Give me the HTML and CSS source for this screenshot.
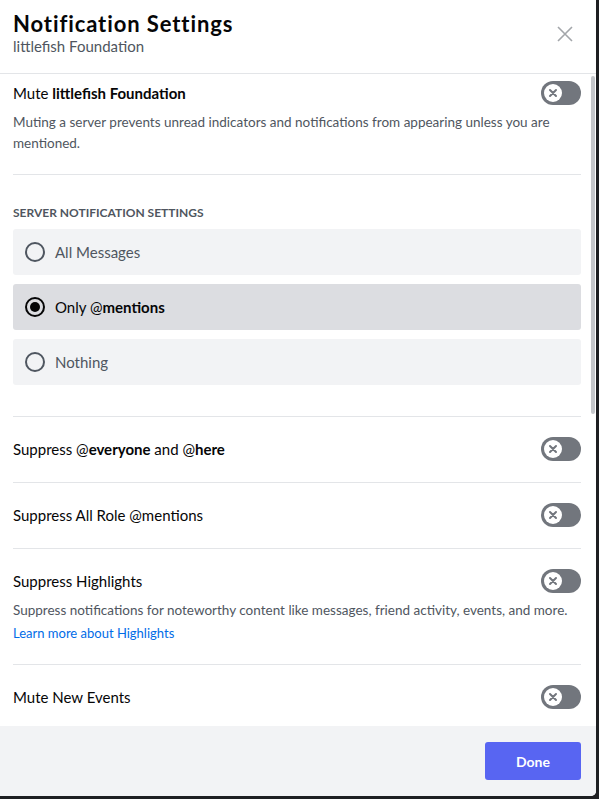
FILE: index.html
```html
<!DOCTYPE html>
<html lang="en">
<head>
<meta charset="utf-8">
<title>Notification Settings</title>
<link rel="stylesheet" href="styles.css">
</head>
<body>
<div class="modal">
  <header class="modal-header">
    <div class="titles">
      <h1 class="title">Notification Settings</h1>
      <div class="subtitle">littlefish Foundation</div>
    </div>
    <button class="close" aria-label="Close">
      <svg width="16" height="16" viewBox="0 0 16 16"><path d="M1 1L15 15M15 1L1 15" stroke="#a3a6aa" stroke-width="1.6" fill="none"/></svg>
    </button>
  </header>
  <div class="content-wrap">
    <div class="content">
      <section class="section first">
        <div class="row">
          <div class="row-title">Mute <strong>littlefish Foundation</strong></div>
          <span class="toggle"><span class="knob"><svg width="10" height="10" viewBox="0 0 10 10"><path d="M2 2L8 8M8 2L2 8" stroke="#72767d" stroke-width="2" stroke-linecap="round"/></svg></span></span>
        </div>
        <p class="desc">Muting a server prevents unread indicators and notifications from appearing unless you are mentioned.</p>
      </section>
      <section class="group">
        <h2 class="label">Server Notification Settings</h2>
        <div class="options">
          <div class="option"><span class="radio"></span><span>All Messages</span></div>
          <div class="option selected"><span class="radio"></span><span>Only @<strong>mentions</strong></span></div>
          <div class="option"><span class="radio"></span><span>Nothing</span></div>
        </div>
      </section>
      <section class="section">
        <div class="row">
          <div class="row-title">Suppress @<strong>everyone</strong> and @<strong>here</strong></div>
          <span class="toggle"><span class="knob"><svg width="10" height="10" viewBox="0 0 10 10"><path d="M2 2L8 8M8 2L2 8" stroke="#72767d" stroke-width="2" stroke-linecap="round"/></svg></span></span>
        </div>
      </section>
      <section class="section">
        <div class="row">
          <div class="row-title">Suppress All Role @mentions</div>
          <span class="toggle"><span class="knob"><svg width="10" height="10" viewBox="0 0 10 10"><path d="M2 2L8 8M8 2L2 8" stroke="#72767d" stroke-width="2" stroke-linecap="round"/></svg></span></span>
        </div>
      </section>
      <section class="section">
        <div class="row">
          <div class="row-title">Suppress Highlights</div>
          <span class="toggle"><span class="knob"><svg width="10" height="10" viewBox="0 0 10 10"><path d="M2 2L8 8M8 2L2 8" stroke="#72767d" stroke-width="2" stroke-linecap="round"/></svg></span></span>
        </div>
        <p class="desc">Suppress notifications for noteworthy content like messages, friend activity, events, and more.</p>
        <a class="link" href="#">Learn more about Highlights</a>
      </section>
      <section class="section last">
        <div class="row">
          <div class="row-title">Mute New Events</div>
          <span class="toggle"><span class="knob"><svg width="10" height="10" viewBox="0 0 10 10"><path d="M2 2L8 8M8 2L2 8" stroke="#72767d" stroke-width="2" stroke-linecap="round"/></svg></span></span>
        </div>
      </section>
    </div>
    <div class="scrollbar"></div>
  </div>
  <footer class="modal-footer">
    <button class="done">Done</button>
  </footer>
</div>
</body>
</html>
```
FILE: styles.css
```css
* { box-sizing: border-box; }
html, body { margin: 0; padding: 0; }
body {
  background: #1e1f22;
  font-family: Lato, "Open Sans", sans-serif;
  width: 599px;
  height: 799px;
  overflow: hidden;
}
.modal {
  width: 596px;
  height: 796px;
  background: #fff;
  border-bottom-right-radius: 5px;
  display: flex;
  flex-direction: column;
  overflow: hidden;
}
.modal-header {
  height: 74px;
  border-bottom: 1px solid #e3e5e8;
  display: flex;
  justify-content: space-between;
  padding: 11px 23px 0 13px;
  flex-shrink: 0;
}
.title {
  margin: 0;
  font-size: 22px;
  line-height: 26px;
  font-weight: 700;
  letter-spacing: 0.9px;
  color: #060607;
}
.subtitle {
  font-size: 15px;
  line-height: 19px;
  color: #4f5660;
}
.close {
  background: none;
  border: 0;
  padding: 0;
  margin-top: 15px;
  width: 16px;
  height: 16px;
  cursor: pointer;
}
.close svg { display: block; }
.content-wrap {
  flex: 1;
  display: flex;
  overflow: hidden;
}
.content {
  flex: 1;
  padding: 0 10px 0 13px;
}
.scrollbar {
  width: 4px;
  margin: 2px 1px 0 0;
  height: 338px;
  background: #c4c6ca;
  border-radius: 2px;
}
.section {
  border-bottom: 1px solid #e3e5e8;
  padding: 20px 0 21px;
}
.section.first { padding-top: 7px; padding-bottom: 20px; }
.section.last { border-bottom: 0; }
.row {
  display: flex;
  align-items: center;
  justify-content: space-between;
  height: 24px;
}
.row-title {
  font-size: 15px;
  line-height: 20px;
  color: #060607;
}
.row-title strong { font-weight: 700; }
.toggle {
  width: 40px;
  height: 24px;
  border-radius: 12px;
  background: #72767d;
  display: flex;
  align-items: center;
  padding-left: 3px;
}
.knob {
  width: 18px;
  height: 18px;
  border-radius: 50%;
  background: #fff;
  display: flex;
  align-items: center;
  justify-content: center;
}
.knob svg { display: block; }
.desc {
  margin: 7px 0 0;
  font-size: 13.5px;
  line-height: 21px;
  color: #4f5660;
}
.link {
  display: block;
  margin-top: 2px;
  font-size: 13px;
  line-height: 20px;
  color: #006ce7;
  text-decoration: none;
}
.section .link + * { margin: 0; }
.group {
  border-bottom: 1px solid #e3e5e8;
  padding: 30px 0 31px;
}
.label {
  margin: 0 0 8px;
  font-size: 12px;
  line-height: 16px;
  font-weight: 700;
  text-transform: uppercase;
  color: #4f5660;
}
.options {
  display: flex;
  flex-direction: column;
  gap: 9px;
}
.option {
  height: 46px;
  background: #f2f3f5;
  border-radius: 3px;
  display: flex;
  align-items: center;
  padding-left: 12px;
  gap: 10px;
  font-size: 15px;
  color: #4f5660;
}
.option.selected {
  background: #dcdde1;
  color: #060607;
}
.option strong { font-weight: 700; }
.radio {
  width: 20px;
  height: 20px;
  border-radius: 50%;
  border: 2px solid #4f5660;
  display: flex;
  align-items: center;
  justify-content: center;
}
.option.selected .radio { border-color: #060607; }
.option.selected .radio::after {
  content: "";
  width: 10px;
  height: 10px;
  border-radius: 50%;
  background: #060607;
}
.modal-footer {
  height: 70px;
  background: #f2f3f5;
  display: flex;
  justify-content: flex-end;
  align-items: flex-start;
  padding: 16px 15px 0 0;
  flex-shrink: 0;
}
.done {
  width: 96px;
  height: 38px;
  border: 0;
  border-radius: 3px;
  background: #5865f2;
  color: #fff;
  font-family: Lato, "Open Sans", sans-serif;
  font-size: 14px;
  font-weight: 700;
  cursor: pointer;
}
```
